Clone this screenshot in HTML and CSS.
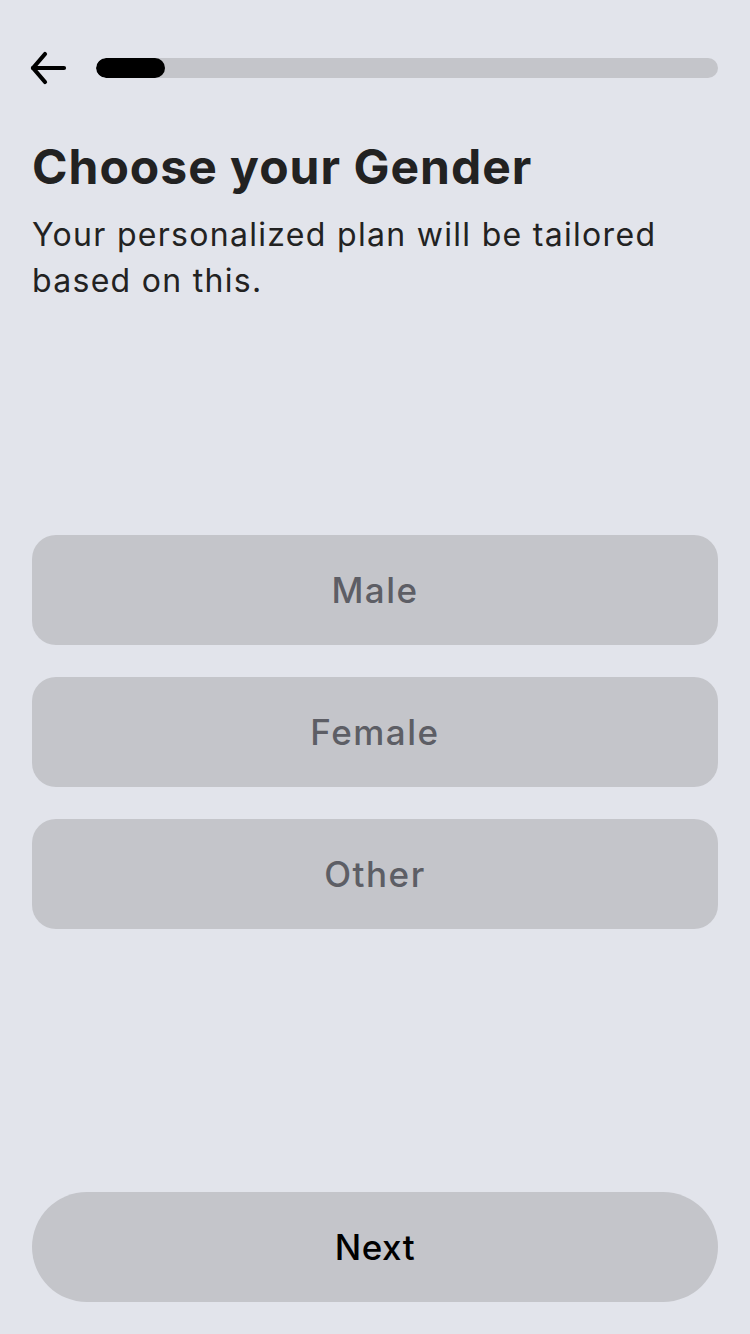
FILE: index.html
```html
<!DOCTYPE html>
<html lang="en">
<head>
<meta charset="utf-8">
<title>Choose your Gender</title>
<link rel="stylesheet" href="styles.css">
</head>
<body>
<main class="screen">
  <header class="topbar">
    <button class="back" aria-label="Back">
      <svg width="38" height="34" viewBox="0 0 38 34" fill="none" stroke="#000" stroke-width="4.2" stroke-linecap="round" stroke-linejoin="round">
        <path d="M3 17 H34"/>
        <path d="M15 3 L3 17 L15 31"/>
      </svg>
    </button>
    <div class="progress"><div class="progress-fill" style="width: 69px"></div></div>
  </header>

  <section class="intro">
    <h1 class="title">Choose your Gender</h1>
    <p class="subtitle">Your personalized plan will be tailored based on this.</p>
  </section>

  <section class="options">
    <button class="option">Male</button>
    <button class="option">Female</button>
    <button class="option">Other</button>
  </section>

  <footer class="footer">
    <button class="next">Next</button>
  </footer>
</main>
</body>
</html>
```

FILE: styles.css
```css
* { box-sizing: border-box; }
html, body {
  margin: 0;
  padding: 0;
  background: #e2e4eb;
}
body {
  font-family: "Inter", "Open Sans", "DejaVu Sans", sans-serif;
  color: #222222;
}
.screen {
  min-height: 1334px;
  padding: 51px 32px 32px 32px;
  display: flex;
  flex-direction: column;
}
.topbar {
  display: flex;
  align-items: center;
  gap: 28px;
  height: 34px;
}
.back {
  border: 0;
  background: none;
  padding: 0;
  margin: 0 0 0 -2px;
  width: 38px;
  height: 34px;
  display: flex;
  align-items: center;
  justify-content: center;
  flex: none;
}
.progress {
  flex: 1;
  height: 20px;
  border-radius: 10px;
  background: #c4c5ca;
  overflow: hidden;
}
.progress-fill {
  height: 100%;
  background: #000;
  border-radius: 10px;
}
.intro {
  margin-top: 52px;
}
.title {
  margin: 0;
  font-size: 48px;
  font-weight: 700;
  line-height: 60px;
  letter-spacing: 1px;
  color: #222222;
}
.subtitle {
  margin: 15px 0 0 0;
  font-size: 32px;
  font-weight: 400;
  line-height: 46px;
  color: #222222;
  letter-spacing: 1.3px;
}
.options {
  margin-top: 231px;
  display: flex;
  flex-direction: column;
  gap: 32px;
}
.option {
  height: 110px;
  border: 0;
  border-radius: 24px;
  background: #c4c5ca;
  color: #5d5e65;
  font-family: inherit;
  font-size: 35px;
  font-weight: 500;
  letter-spacing: 1.5px;
}
.footer {
  margin-top: auto;
}
.next {
  width: 100%;
  height: 110px;
  border: 0;
  border-radius: 55px;
  background: #c4c5ca;
  color: #000;
  font-family: inherit;
  font-size: 35px;
  font-weight: 500;
  letter-spacing: 0.5px;
}
```
